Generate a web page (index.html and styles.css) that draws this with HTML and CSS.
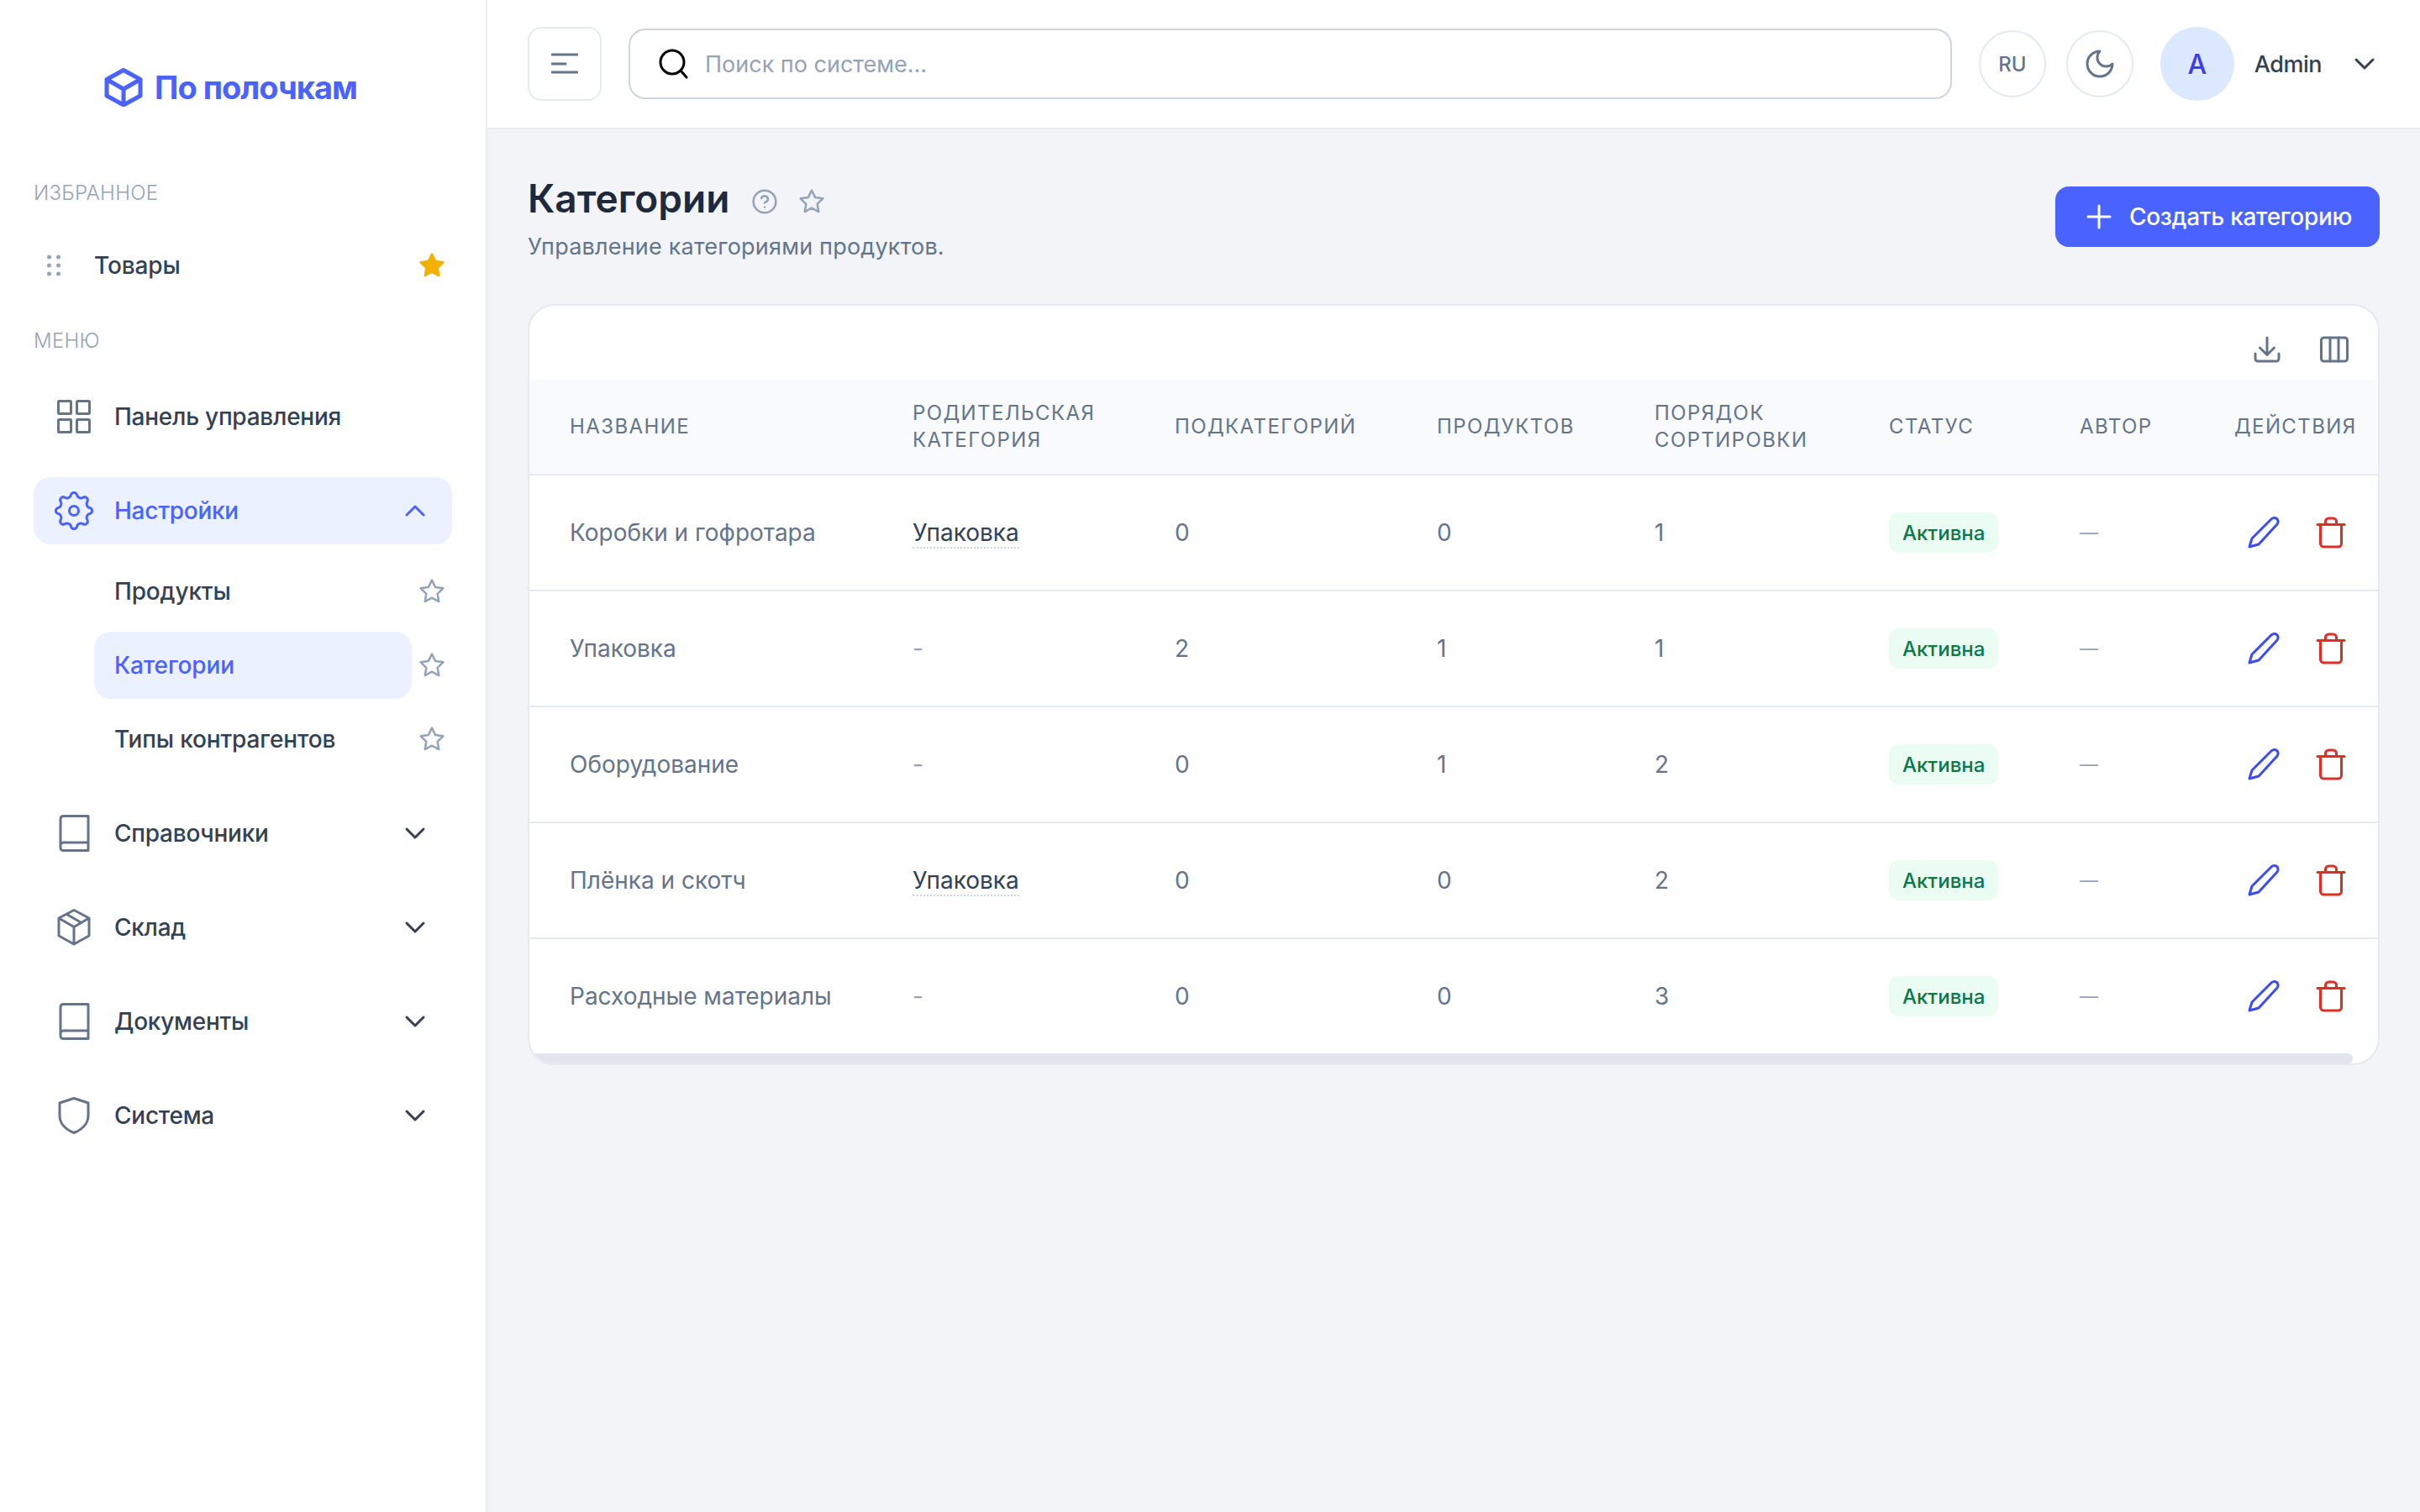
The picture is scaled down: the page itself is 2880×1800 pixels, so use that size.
FILE: index.html
```html
<!DOCTYPE html>
<html lang="ru">
<head>
    <meta charset="UTF-8">
    <title>Категории</title>
    <link rel="stylesheet" href="styles.css">
</head>
<body>
<div class="app">
    <aside class="sidebar">
        <div class="logo">
            <svg class="logo-icon" viewBox="0 0 46 46"><path d="M23 2.5 43 13.5V33L23 44 3 33V13.5ZM3 13.5 23 25 43 13.5M23 25V44"/></svg>
            <span>По полочкам</span>
        </div>

        <div class="nav-label">Избранное</div>
        <div class="fav-row">
            <svg class="dots" viewBox="0 0 16 26"><circle cx="2.5" cy="3" r="2.5"/><circle cx="13.5" cy="3" r="2.5"/><circle cx="2.5" cy="13" r="2.5"/><circle cx="13.5" cy="13" r="2.5"/><circle cx="2.5" cy="23" r="2.5"/><circle cx="13.5" cy="23" r="2.5"/></svg>
            <span class="grow">Товары</span>
            <svg class="star star-on" viewBox="0 0 24 24"><polygon points="12 2 15.09 8.26 22 9.27 17 14.14 18.18 21.02 12 17.77 5.82 21.02 7 14.14 2 9.27 8.91 8.26"/></svg>
        </div>

        <div class="nav-label nav-label-menu">Меню</div>
        <nav class="nav">
            <a class="nav-item">
                <svg class="nav-icon" viewBox="0 0 48 48"><rect x="5.5" y="5.5" width="15" height="15" rx="1"/><rect x="27.5" y="5.5" width="15" height="15" rx="1"/><rect x="5.5" y="27.5" width="15" height="15" rx="1"/><rect x="27.5" y="27.5" width="15" height="15" rx="1"/></svg>
                <span class="grow">Панель управления</span>
            </a>
            <a class="nav-item active">
                <svg class="nav-icon" viewBox="0 0 48 48"><path d="M20.61 4.8A3.6 3.6 0 0 1 27.39 4.8 5 5 0 0 0 35.19 8.03 3.6 3.6 0 0 1 39.97 12.81 5 5 0 0 0 43.2 20.61 3.6 3.6 0 0 1 43.2 27.39 5 5 0 0 0 39.97 35.19 3.6 3.6 0 0 1 35.19 39.97 5 5 0 0 0 27.39 43.2 3.6 3.6 0 0 1 20.61 43.2 5 5 0 0 0 12.81 39.97 3.6 3.6 0 0 1 8.03 35.19 5 5 0 0 0 4.8 27.39 3.6 3.6 0 0 1 4.8 20.61 5 5 0 0 0 8.03 12.81 3.6 3.6 0 0 1 12.81 8.03 5 5 0 0 0 20.61 4.8Z"/><circle cx="24" cy="24" r="5.5"/></svg>
                <span class="grow">Настройки</span>
                <svg class="chevron" viewBox="0 0 24 24"><path d="m6 15 6-6 6 6"/></svg>
            </a>
            <div class="sub-list">
                <div class="sub-row">
                    <a class="sub-link">Продукты</a>
                    <svg class="star" viewBox="0 0 24 24"><polygon points="12 2 15.09 8.26 22 9.27 17 14.14 18.18 21.02 12 17.77 5.82 21.02 7 14.14 2 9.27 8.91 8.26"/></svg>
                </div>
                <div class="sub-row">
                    <a class="sub-link current">Категории</a>
                    <svg class="star" viewBox="0 0 24 24"><polygon points="12 2 15.09 8.26 22 9.27 17 14.14 18.18 21.02 12 17.77 5.82 21.02 7 14.14 2 9.27 8.91 8.26"/></svg>
                </div>
                <div class="sub-row">
                    <a class="sub-link">Типы контрагентов</a>
                    <svg class="star" viewBox="0 0 24 24"><polygon points="12 2 15.09 8.26 22 9.27 17 14.14 18.18 21.02 12 17.77 5.82 21.02 7 14.14 2 9.27 8.91 8.26"/></svg>
                </div>
            </div>
            <a class="nav-item">
                <svg class="nav-icon" viewBox="0 0 48 48"><path d="M41 3.5H11A3.500 3.500 0 0 0 8 7V41A3.500 3.500 0 0 0 11 44.500H41ZM41 35H11A3.500 3.500 0 0 0 8 38.500"/></svg>
                <span class="grow">Справочники</span>
                <svg class="chevron" viewBox="0 0 24 24"><path d="m6 9 6 6 6-6"/></svg>
            </a>
            <a class="nav-item">
                <svg class="nav-icon" viewBox="0 0 48 48"><path d="M24 3.500 42 13V34L24 44 6 34V13ZM6 13 24 23.500 42 13M24 23.500V44M15 8.200 33 18.500"/></svg>
                <span class="grow">Склад</span>
                <svg class="chevron" viewBox="0 0 24 24"><path d="m6 9 6 6 6-6"/></svg>
            </a>
            <a class="nav-item">
                <svg class="nav-icon" viewBox="0 0 48 48"><path d="M41 3.5H11A3.500 3.500 0 0 0 8 7V41A3.500 3.500 0 0 0 11 44.500H41ZM41 35H11A3.500 3.500 0 0 0 8 38.500"/></svg>
                <span class="grow">Документы</span>
                <svg class="chevron" viewBox="0 0 24 24"><path d="m6 9 6 6 6-6"/></svg>
            </a>
            <a class="nav-item">
                <svg class="nav-icon" viewBox="0 0 48 48"><path d="M24 3.500 41 9V24C41 34 33 41 24 44.500 15 41 7 34 7 24V9Z"/></svg>
                <span class="grow">Система</span>
                <svg class="chevron" viewBox="0 0 24 24"><path d="m6 9 6 6 6-6"/></svg>
            </a>
        </nav>
    </aside>

    <div class="page">
        <header class="topbar">
            <button class="menu-btn">
                <svg viewBox="0 0 32 32"><path d="M1 5H31M1 16H17M1 26H31"/></svg>
            </button>
            <div class="search">
                <svg viewBox="0 0 36 36"><circle cx="17" cy="16" r="14"/><path d="M27 26 34 34"/></svg>
                <span>Поиск по системе...</span>
            </div>
            <div class="round-btn lang">RU</div>
            <div class="round-btn">
                <svg viewBox="0 0 24 24"><path d="M12 3a6 6 0 0 0 9 9 9 9 0 1 1-9-9Z"/></svg>
            </div>
            <div class="avatar">A</div>
            <span class="user-name">Admin</span>
            <svg class="chevron user-chevron" viewBox="0 0 24 24"><path d="m6 9 6 6 6-6"/></svg>
        </header>

        <main class="content">
            <div class="page-head">
                <div>
                    <div class="title-row">
                        <h1>Категории</h1>
                        <svg class="help" viewBox="0 0 24 24"><circle cx="12" cy="12" r="10"/><path d="M9.090 9a3 3 0 0 1 5.830 1c0 2-3 3-3 3M12 17h.01"/></svg>
                        <svg class="star" viewBox="0 0 24 24"><polygon points="12 2 15.09 8.26 22 9.27 17 14.14 18.18 21.02 12 17.77 5.82 21.02 7 14.14 2 9.27 8.91 8.26"/></svg>
                    </div>
                    <p class="subtitle">Управление категориями продуктов.</p>
                </div>
                <button class="create-btn">
                    <svg viewBox="0 0 32 32"><path d="M16 3V29M3 16H29"/></svg>
                    Создать категорию
                </button>
            </div>

            <section class="card">
                <div class="toolbar">
                    <svg viewBox="0 0 40 40"><path d="M20 6V26M11.500 18 20 26.500 28.500 18M6 25V31A3 3 0 0 0 9 34H31A3 3 0 0 0 34 31V25"/></svg>
                    <svg viewBox="0 0 40 40"><rect x="4.500" y="6" width="31" height="28" rx="3"/><path d="M15 6V34M25 6V34"/></svg>
                </div>
                <table class="table">
                    <colgroup>
                        <col class="col-name"><col class="col-parent"><col class="col-sub"><col class="col-prod"><col class="col-sort"><col class="col-status"><col class="col-author"><col class="col-actions">
                    </colgroup>
                    <thead>
                        <tr>
                            <th>Название</th>
                            <th>Родительская категория</th>
                            <th>Подкатегорий</th>
                            <th>Продуктов</th>
                            <th>Порядок сортировки</th>
                            <th>Статус</th>
                            <th>Автор</th>
                            <th>Действия</th>
                        </tr>
                    </thead>
                    <tbody>
                        <tr>
                            <td>Коробки и гофротара</td>
                            <td><a class="parent-link">Упаковка</a></td>
                            <td>0</td><td>0</td><td>1</td>
                            <td><span class="badge">Активна</span></td>
                            <td class="dash">—</td>
                            <td><div class="actions">
                                <svg class="edit" viewBox="0 0 40 40"><path d="M3 37 6 27 29 4A4.600 4.600 0 0 1 36 10L14 34Z"/></svg>
                                <svg class="trash" viewBox="0 0 40 40"><path d="M4 10.500H36M7.500 10.500V33A4 4 0 0 0 11.500 37H28.500A4 4 0 0 0 32.500 33V10.500M13.500 10.500V7A4 4 0 0 1 17.500 3H22.500A4 4 0 0 1 26.500 7V10.500"/></svg>
                            </div></td>
                        </tr>
                        <tr>
                            <td>Упаковка</td>
                            <td class="muted">-</td>
                            <td>2</td><td>1</td><td>1</td>
                            <td><span class="badge">Активна</span></td>
                            <td class="dash">—</td>
                            <td><div class="actions">
                                <svg class="edit" viewBox="0 0 40 40"><path d="M3 37 6 27 29 4A4.600 4.600 0 0 1 36 10L14 34Z"/></svg>
                                <svg class="trash" viewBox="0 0 40 40"><path d="M4 10.500H36M7.500 10.500V33A4 4 0 0 0 11.500 37H28.500A4 4 0 0 0 32.500 33V10.500M13.500 10.500V7A4 4 0 0 1 17.500 3H22.500A4 4 0 0 1 26.500 7V10.500"/></svg>
                            </div></td>
                        </tr>
                        <tr>
                            <td>Оборудование</td>
                            <td class="muted">-</td>
                            <td>0</td><td>1</td><td>2</td>
                            <td><span class="badge">Активна</span></td>
                            <td class="dash">—</td>
                            <td><div class="actions">
                                <svg class="edit" viewBox="0 0 40 40"><path d="M3 37 6 27 29 4A4.600 4.600 0 0 1 36 10L14 34Z"/></svg>
                                <svg class="trash" viewBox="0 0 40 40"><path d="M4 10.500H36M7.500 10.500V33A4 4 0 0 0 11.500 37H28.500A4 4 0 0 0 32.500 33V10.500M13.500 10.500V7A4 4 0 0 1 17.500 3H22.500A4 4 0 0 1 26.500 7V10.500"/></svg>
                            </div></td>
                        </tr>
                        <tr>
                            <td>Плёнка и скотч</td>
                            <td><a class="parent-link">Упаковка</a></td>
                            <td>0</td><td>0</td><td>2</td>
                            <td><span class="badge">Активна</span></td>
                            <td class="dash">—</td>
                            <td><div class="actions">
                                <svg class="edit" viewBox="0 0 40 40"><path d="M3 37 6 27 29 4A4.600 4.600 0 0 1 36 10L14 34Z"/></svg>
                                <svg class="trash" viewBox="0 0 40 40"><path d="M4 10.500H36M7.500 10.500V33A4 4 0 0 0 11.500 37H28.500A4 4 0 0 0 32.500 33V10.500M13.500 10.500V7A4 4 0 0 1 17.500 3H22.500A4 4 0 0 1 26.500 7V10.500"/></svg>
                            </div></td>
                        </tr>
                        <tr>
                            <td>Расходные материалы</td>
                            <td class="muted">-</td>
                            <td>0</td><td>0</td><td>3</td>
                            <td><span class="badge">Активна</span></td>
                            <td class="dash">—</td>
                            <td><div class="actions">
                                <svg class="edit" viewBox="0 0 40 40"><path d="M3 37 6 27 29 4A4.600 4.600 0 0 1 36 10L14 34Z"/></svg>
                                <svg class="trash" viewBox="0 0 40 40"><path d="M4 10.500H36M7.500 10.500V33A4 4 0 0 0 11.500 37H28.500A4 4 0 0 0 32.500 33V10.500M13.500 10.500V7A4 4 0 0 1 17.500 3H22.500A4 4 0 0 1 26.500 7V10.500"/></svg>
                            </div></td>
                        </tr>
                    </tbody>
                </table>
                <div class="scroll-track"><div class="scroll-thumb"></div></div>
            </section>
        </main>
    </div>
</div>
</body>
</html>
```

FILE: styles.css
```css
* {
    box-sizing: border-box;
}

body {
    margin: 0;
    font-family: Inter, "Noto Sans", sans-serif;
    font-size: 28px;
    color: #334155;
    background: #f2f4f8;
}

svg {
    flex: none;
    fill: none;
    stroke-linecap: round;
    stroke-linejoin: round;
}

.app {
    display: flex;
    min-height: 1800px;
}

.grow {
    flex: 1;
}

/* sidebar */
.sidebar {
    width: 580px;
    flex: none;
    background: white;
    border-right: 2px solid #e8ebf0;
    padding: 81px 40px 0;
}

.logo {
    display: flex;
    align-items: center;
    gap: 14px;
    height: 46px;
    margin: 0 0 87px 84px;
    color: #4a63ff;
    font-size: 38px;
    font-weight: 700;
    letter-spacing: -1px;
}

.logo-icon {
    width: 46px;
    height: 46px;
    stroke: #4a63ff;
    stroke-width: 5;
}

.nav-label {
    font-size: 24px;
    font-weight: 300;
    line-height: 32px;
    letter-spacing: 0.3px;
    color: #94a3b8;
    text-transform: uppercase;
}

.nav-label-menu {
    margin-top: 34px;
    margin-bottom: 34px;
}

.fav-row {
    display: flex;
    align-items: center;
    height: 80px;
    margin-top: 30px;
    padding: 0 8px 0 16px;
    font-weight: 500;
    letter-spacing: -0.15px;
}

.dots {
    width: 16px;
    height: 26px;
    margin-right: 40px;
    fill: #94a3b8;
}

.star {
    width: 32px;
    height: 32px;
    stroke: #94a3b8;
    stroke-width: 1.9;
}

.star-on {
    fill: #f2b000;
    stroke: #f2b000;
}

.nav {
    display: flex;
    flex-direction: column;
    gap: 32px;
}

.nav-item {
    display: flex;
    align-items: center;
    gap: 24px;
    height: 80px;
    padding: 0 24px;
    border-radius: 20px;
    font-weight: 500;
    letter-spacing: -0.25px;
}

.nav-icon {
    width: 48px;
    height: 48px;
    stroke: #64748b;
    stroke-width: 3;
}

.chevron {
    width: 40px;
    height: 40px;
    stroke: #334155;
    stroke-width: 1.8;
}

.nav-item.active {
    background: #ebf1fe;
    color: #4a63ff;
}

.nav-item.active .nav-icon,
.nav-item.active .chevron {
    stroke: #4a63ff;
}

.sub-list {
    display: flex;
    flex-direction: column;
    gap: 8px;
    margin-top: -16px;
}

.sub-row {
    display: flex;
    align-items: center;
    gap: 8px;
    padding-left: 72px;
}

.sub-link {
    display: flex;
    align-items: center;
    width: 378px;
    height: 80px;
    padding-left: 24px;
    border-radius: 20px;
    font-weight: 500;
    letter-spacing: -0.15px;
}

.sub-link.current {
    background: #ebf1fe;
    color: #4a63ff;
}

/* topbar */
.page {
    flex: 1;
    min-width: 0;
}

.topbar {
    display: flex;
    align-items: center;
    height: 154px;
    padding: 0 48px;
    background: white;
    border-bottom: 2px solid #e8ebf0;
}

.menu-btn {
    display: flex;
    align-items: center;
    justify-content: center;
    width: 88px;
    height: 88px;
    padding: 0;
    background: white;
    border: 2px solid #e5e9f0;
    border-radius: 16px;
}

.menu-btn svg {
    width: 32px;
    height: 32px;
    stroke: #64748b;
    stroke-width: 3;
}

.search {
    flex: 1;
    display: flex;
    align-items: center;
    gap: 20px;
    height: 84px;
    margin: 0 32px;
    padding-left: 33px;
    border: 2px solid #cfd5df;
    border-radius: 20px;
    color: #94a3b8;
    font-size: 27px;
}

.search svg {
    width: 36px;
    height: 36px;
    stroke: #000;
    stroke-width: 3;
}

.round-btn {
    display: flex;
    align-items: center;
    justify-content: center;
    width: 80px;
    height: 80px;
    margin-right: 24px;
    border: 2px solid #e5e9f0;
    border-radius: 50%;
}

.round-btn svg {
    width: 40px;
    height: 40px;
    stroke: #64748b;
    stroke-width: 1.8;
}

.lang {
    font-size: 24px;
    font-weight: 500;
    color: #64748b;
}

.avatar {
    display: flex;
    align-items: center;
    justify-content: center;
    width: 88px;
    height: 88px;
    margin-left: 8px;
    border-radius: 50%;
    background: #dbe8fe;
    color: #3b3bf0;
    font-size: 32px;
    font-weight: 500;
}

.user-name {
    margin-left: 24px;
    font-size: 27px;
    font-weight: 500;
    letter-spacing: -0.5px;
}

.user-chevron {
    margin-left: 31px;
    margin-right: -2px;
}

/* content */
.content {
    padding: 50px 48px 0;
}

.page-head {
    display: flex;
    justify-content: space-between;
    align-items: flex-start;
    margin-bottom: 48px;
}

.title-row {
    display: flex;
    align-items: center;
    height: 64px;
}

h1 {
    margin: 0;
    font-size: 46px;
    font-weight: 600;
    color: #1e293b;
}

.help {
    width: 32px;
    height: 32px;
    margin: 8px 0 0 26px;
    stroke: #94a3b8;
    stroke-width: 1.9;
}

.title-row .star {
    margin: 8px 0 0 24px;
}

.subtitle {
    margin: 6px 0 0;
    font-size: 27px;
    line-height: 40px;
    letter-spacing: 0.2px;
    color: #64748b;
}

.create-btn {
    display: flex;
    align-items: center;
    gap: 20px;
    height: 72px;
    margin-top: 18px;
    padding: 0 33px 0 36px;
    background: #4a63ff;
    border: none;
    border-radius: 16px;
    color: white;
    font-family: inherit;
    font-size: 28px;
    font-weight: 500;
    letter-spacing: -0.3px;
}

.create-btn svg {
    width: 32px;
    height: 32px;
    stroke: white;
    stroke-width: 3;
}

/* table card */
.card {
    background: white;
    border: 2px solid #e5e9f0;
    border-radius: 32px;
    overflow: hidden;
}

.toolbar {
    display: flex;
    justify-content: flex-end;
    gap: 40px;
    padding: 32px 32px 16px;
}

.toolbar svg {
    width: 40px;
    height: 40px;
    stroke: #64748b;
    stroke-width: 3;
}

.table {
    width: 2220px;
    table-layout: fixed;
    border-collapse: collapse;
}

.col-name { width: 408px; }
.col-parent { width: 312px; }
.col-sub { width: 312px; }
.col-prod { width: 259px; }
.col-sort { width: 279px; }
.col-status { width: 227px; }
.col-author { width: 184px; }
.col-actions { width: 239px; }

th {
    height: 113px;
    padding: 0 0 0 48px;
    background: #f8fafc;
    border-bottom: 2px solid #e5e9f0;
    color: #64748b;
    font-size: 24px;
    font-weight: 400;
    line-height: 32px;
    letter-spacing: 1.4px;
    text-align: left;
    text-transform: uppercase;
}

td {
    height: 138px;
    padding: 0 0 0 48px;
    border-bottom: 2px solid #e5e9f0;
    color: #64748b;
}

tbody tr:last-child td {
    height: 137px;
    border-bottom: none;
}

.muted {
    color: #94a3b8;
}

.dash {
    color: #94a3b8;
    font-size: 22px;
}

.parent-link {
    color: #334155;
    border-bottom: 2px dotted #cbd5e1;
}

.badge {
    display: inline-flex;
    align-items: center;
    height: 48px;
    padding: 0 16px;
    border-radius: 12px;
    background: #ebfcf3;
    color: #067a4c;
    font-size: 24px;
    font-weight: 500;
}

.actions {
    display: flex;
    gap: 40px;
    margin-left: 15px;
}

.actions svg {
    width: 40px;
    height: 40px;
    stroke-width: 3;
}

.edit {
    stroke: #3b4cf5;
}

.trash {
    stroke: #dc2f26;
}

.scroll-track {
    height: 12px;
}

.scroll-thumb {
    width: 2170px;
    height: 12px;
    border-radius: 0 8px 8px 0;
    background: #e2e6ec;
}
```
